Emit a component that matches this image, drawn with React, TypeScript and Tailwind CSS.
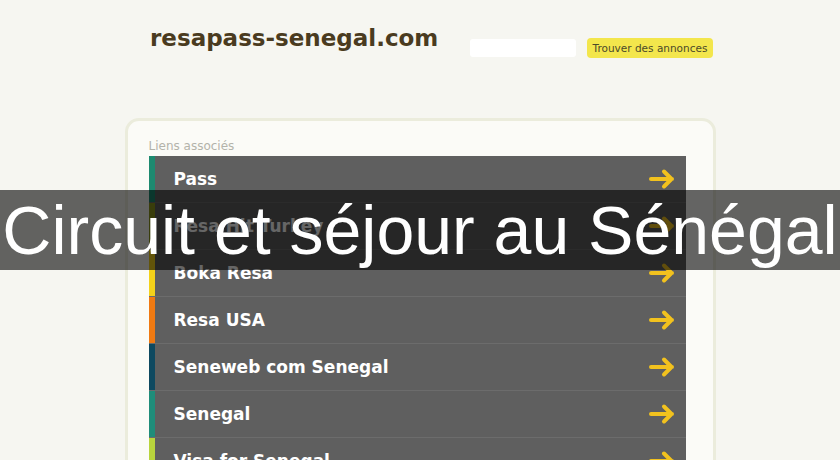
const links = [
  { label: "Pass", color: "bg-[#1d8a70]" },
  { label: "Resa Hit Turkey", color: "bg-[#8f9a1c]" },
  { label: "Boka Resa", color: "bg-[#f4d21a]" },
  { label: "Resa USA", color: "bg-[#f07a12]" },
  { label: "Seneweb com Senegal", color: "bg-[#0e4960]" },
  { label: "Senegal", color: "bg-[#1f8d7a]" },
  { label: "Visa for Senegal", color: "bg-[#b8d43c]" },
];

function Arrow() {
  return (
    <svg width="28" height="22" viewBox="0 0 28 22" fill="none">
      <path
        d="M2 11h21M15 3.5l7.5 7.5-7.5 7.5"
        stroke="#f2c21e"
        strokeWidth="4"
        strokeLinecap="round"
        strokeLinejoin="round"
      />
    </svg>
  );
}

export default function App() {
  return (
    <div className="relative h-[460px] w-[840px] overflow-hidden bg-[#f6f6f1] font-['DejaVu_Sans',sans-serif]">
      <header className="flex h-[80px] items-start pl-[150px] pr-[127px] pt-[22px]">
        <h1 className="text-[23px] font-bold leading-[32px] text-[#4a3b20]">resapass-senegal.com</h1>
        <div className="ml-auto mt-[17px] h-[18px] w-[106px] rounded-[3px] bg-white" />
        <button className="ml-[11px] mt-[16px] h-[20px] w-[126px] rounded-[4px] bg-[#f3e64c] text-[10.5px] leading-[20px] text-[#4b4a2a]">
          Trouver des annonces
        </button>
      </header>

      <main className="mx-auto mt-[38px] w-[591px] rounded-[14px] border-[3px] border-[#ebecdc] bg-[#fbfbf7] pl-[21px] pr-[27px] pt-[16px] pb-6">
        <p className="text-[12px] leading-[18px] text-[#b3b3aa]">Liens associés</p>
        <ul className="mt-[1px]">
          {links.map((link) => (
            <li key={link.label} className="flex h-[47px] border-b border-[#6c6c6c] bg-[#5f5f5f]">
              <span className={`w-[6px] ${link.color}`} />
              <span className="flex-1 pl-[19px] text-[17px] font-bold leading-[46px] text-white">{link.label}</span>
              <span className="flex items-center pr-[9px]">
                <Arrow />
              </span>
            </li>
          ))}
        </ul>
      </main>

      <div className="absolute left-0 top-[190px] flex h-[80px] w-full items-center justify-center bg-black/60">
        <span className="whitespace-nowrap font-['Liberation_Sans',Arial,sans-serif] text-[68px] leading-none text-white">
          Circuit et séjour au Sénégal
        </span>
      </div>
    </div>
  );
}
